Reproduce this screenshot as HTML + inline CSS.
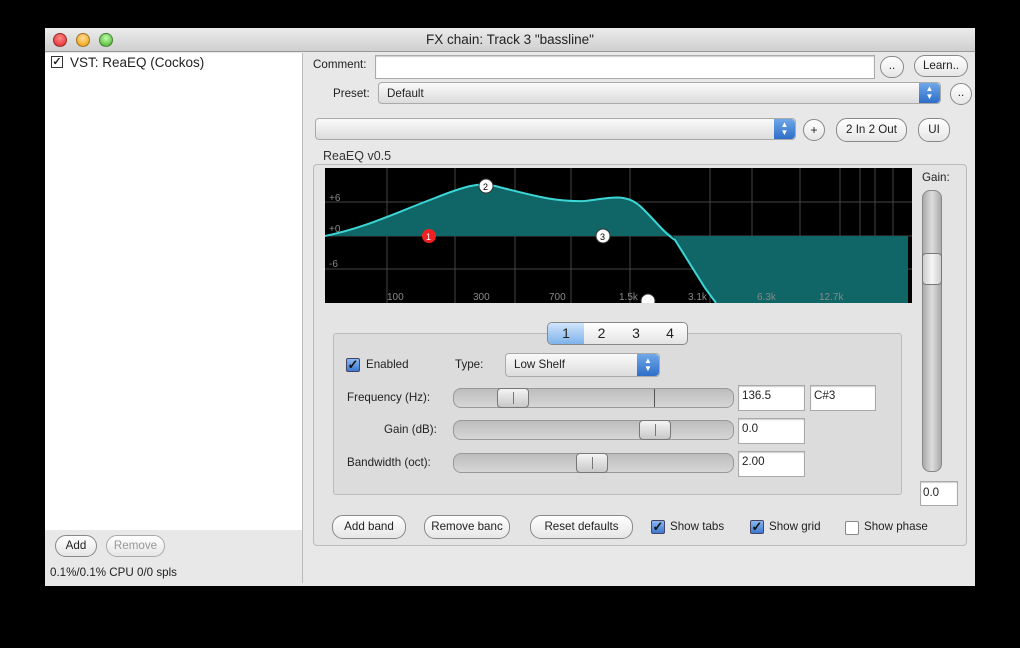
<!DOCTYPE html>
<html><head><meta charset="utf-8"><style>
*{box-sizing:border-box;margin:0;padding:0}
body{width:1020px;height:648px;background:#000;font-family:"Liberation Sans",sans-serif;font-size:11.6px;color:#222;position:relative;overflow:hidden}
.a{position:absolute}
.win{left:45px;top:28px;width:930px;height:558px;background:#e8e8e8}
.title{left:45px;top:28px;width:930px;height:24px;background:linear-gradient(#ececec,#cfcfcf);border-bottom:1px solid #999;text-align:center;font-size:13.5px;line-height:24px;color:#222}
.dot{width:14px;height:14px;border-radius:50%;top:33px;border:1px solid rgba(0,0,0,.35)}
.inp{background:#fff;border:1px solid #aaa;box-shadow:inset 0 1px 1px #ccc}
.btn{background:linear-gradient(#fff,#e6e6e6);border:1px solid #888;border-radius:11px;text-align:center;line-height:20px;height:22px}
.pop{background:linear-gradient(#fafafa,#dcdcdc);border:1px solid #aaa;border-radius:4px}
.arr{background:linear-gradient(#6fa8e8,#2d6ec8);border-radius:0 4px 4px 0;color:#fff;font-size:8px;text-align:center;line-height:8px;padding-top:2px}
.trk{height:20px;background:linear-gradient(#bdbdbd,#d6d6d6);border:1px solid #999;border-radius:8px}
.th{width:32px;height:20px;background:linear-gradient(#f4f4f4,#c8c8c8);border:1px solid #777;border-radius:4px}
.th:after{content:"";position:absolute;left:15px;top:3px;width:1px;height:12px;background:#777}
.cb{width:14px;height:14px;border:1px solid #446;border-radius:2px;background:linear-gradient(#8bb8ee,#3b78d0);color:#111;font-size:13px;line-height:12px;text-align:center;font-weight:bold}
</style></head><body>
<div class="a win"></div>
<div class="a title">FX chain: Track 3 "bassline"</div>
<div class="a dot" style="left:53px;background:radial-gradient(circle at 50% 35%,#f88,#d22)"></div>
<div class="a dot" style="left:76px;background:radial-gradient(circle at 50% 35%,#fd9,#e90)"></div>
<div class="a dot" style="left:99px;background:radial-gradient(circle at 50% 35%,#bfa,#4a2)"></div>
<div class="a" style="left:45px;top:53px;width:257px;height:477px;background:#fff"></div>
<div class="a" style="left:51px;top:56px;width:12px;height:12px;border:1px solid #333;font-size:11px;line-height:10px;text-align:center;font-weight:bold">✓</div>
<div class="a" style="left:70px;top:55px;font-size:13.5px">VST: ReaEQ (Cockos)</div>
<div class="a btn" style="left:55px;top:535px;width:42px;height:22px">Add</div>
<div class="a btn" style="left:106px;top:535px;width:59px;height:22px;color:#999;border-color:#aaa">Remove</div>
<div class="a" style="left:50px;top:566px">0.1%/0.1% CPU 0/0 spls</div>
<div class="a" style="left:302px;top:53px;width:1px;height:530px;background:#bbb"></div>

<div class="a" style="left:313px;top:58px">Comment:</div>
<div class="a inp" style="left:375px;top:55px;width:500px;height:24px"></div>
<div class="a btn" style="left:880px;top:56px;width:24px;height:22px;line-height:18px">..</div>
<div class="a btn" style="left:914px;top:55px;width:54px;height:22px">Learn..</div>
<div class="a" style="left:333px;top:87px">Preset:</div>
<div class="a pop" style="left:378px;top:82px;width:563px;height:22px;padding:4px 8px">Default</div>
<div class="a arr" style="left:919px;top:83px;width:21px;height:20px">▲<br>▼</div>
<div class="a btn" style="left:950px;top:83px;width:22px;height:22px;line-height:18px">..</div>
<div class="a pop" style="left:315px;top:118px;width:481px;height:22px"></div>
<div class="a arr" style="left:774px;top:119px;width:21px;height:20px">▲<br>▼</div>
<div class="a btn" style="left:803px;top:119px;width:22px;height:22px;font-size:12px">+</div>
<div class="a btn" style="left:836px;top:118px;width:71px;height:24px;line-height:22px">2 In 2 Out</div>
<div class="a btn" style="left:918px;top:118px;width:32px;height:24px;line-height:22px">UI</div>
<div class="a" style="left:323px;top:149px;font-size:12.5px;color:#333">ReaEQ v0.5</div>
<div class="a" style="left:313px;top:164px;width:654px;height:382px;border:1px solid #bbb;border-radius:4px;background:#e4e4e4"></div>

<svg class="a" style="left:325px;top:168px" width="587" height="135" viewBox="0 0 587 135">
<rect width="587" height="135" fill="#000"/>
<g stroke="#444" stroke-width="1">
<line x1="62" y1="0" x2="62" y2="135"/><line x1="130" y1="0" x2="130" y2="135"/><line x1="190" y1="0" x2="190" y2="135"/><line x1="246" y1="0" x2="246" y2="135"/><line x1="305" y1="0" x2="305" y2="135"/><line x1="385" y1="0" x2="385" y2="135"/><line x1="427" y1="0" x2="427" y2="135"/><line x1="475" y1="0" x2="475" y2="135"/><line x1="515" y1="0" x2="515" y2="135"/><line x1="535" y1="0" x2="535" y2="135"/><line x1="550" y1="0" x2="550" y2="135"/><line x1="568" y1="0" x2="568" y2="135"/>
<line x1="0" y1="34" x2="587" y2="34"/><line x1="0" y1="68" x2="587" y2="68"/><line x1="0" y1="101" x2="587" y2="101"/>
</g>
<path d="M0 68 C40 60 70 45 110 30 C140 18 155 14 170 18 C210 28 230 34 260 33 C285 30 300 25 315 38 C330 52 338 62 348 68 Z" fill="#106666"/>
<path d="M348 68 L380 120 L390 135 L583 135 L583 68 Z" fill="#106666"/>
<path d="M0 68 C40 60 70 45 110 30 C140 18 155 14 170 18 C210 28 230 34 260 33 C285 30 300 25 315 38 C330 52 340 66 350 72 L380 120 L391 135" fill="none" stroke="#3cd6d6" stroke-width="2"/>
<g fill="#888" font-size="10" font-family="Liberation Sans"><text x="4" y="33">+6</text><text x="4" y="64">+0</text><text x="4" y="99">-6</text>
<text x="62" y="132">100</text><text x="148" y="132">300</text><text x="224" y="132">700</text><text x="294" y="132">1.5k</text><text x="363" y="132">3.1k</text><text x="432" y="132">6.3k</text><text x="494" y="132">12.7k</text></g>
<circle cx="104" cy="68" r="7" fill="#e22"/><text x="101" y="72" font-size="9" fill="#fff">1</text>
<circle cx="161" cy="18" r="7" fill="#fff" stroke="#333"/><text x="158" y="22" font-size="9">2</text>
<circle cx="278" cy="68" r="7" fill="#fff" stroke="#333"/><text x="275" y="72" font-size="9">3</text>
<circle cx="323" cy="133" r="7" fill="#fff" stroke="#333"/>
</svg>

<div class="a" style="left:922px;top:171px">Gain:</div>
<div class="a" style="left:922px;top:190px;width:20px;height:282px;border:1px solid #888;border-radius:8px;background:linear-gradient(90deg,#aaa,#ddd,#aaa)"></div>
<div class="a" style="left:922px;top:253px;width:20px;height:32px;border:1px solid #777;border-radius:4px;background:linear-gradient(90deg,#ccc,#f6f6f6,#ccc)"></div>
<div class="a inp" style="left:920px;top:481px;width:38px;height:25px;padding:4px 2px">0.0</div>

<div class="a" style="left:333px;top:333px;width:569px;height:162px;border:1px solid #bbb;border-radius:3px;background:#dcdcdc"></div>
<div class="a" style="left:547px;top:322px;width:141px;height:23px;border:1px solid #888;border-radius:5px;background:linear-gradient(#fff,#e4e4e4);display:flex;font-size:14px;line-height:21px">
<div style="width:36px;text-align:center;background:linear-gradient(#cfe4fb,#7fb3ea);border-radius:4px 0 0 4px">1</div><div style="width:35px;text-align:center">2</div><div style="width:34px;text-align:center">3</div><div style="width:34px;text-align:center">4</div></div>
<div class="a cb" style="left:346px;top:358px">✓</div>
<div class="a" style="left:366px;top:358px">Enabled</div>
<div class="a" style="left:455px;top:358px">Type:</div>
<div class="a pop" style="left:505px;top:353px;width:155px;height:24px;padding:4px 8px">Low Shelf</div>
<div class="a arr" style="left:637px;top:354px;width:22px;height:22px;padding-top:3px">▲<br>▼</div>
<div class="a" style="left:347px;top:391px">Frequency (Hz):</div>
<div class="a trk" style="left:453px;top:388px;width:281px"></div>
<div class="a" style="left:654px;top:389px;width:1px;height:18px;background:#555"></div>
<div class="a th" style="left:497px;top:388px"></div>
<div class="a inp" style="left:738px;top:385px;width:67px;height:26px;padding:3px 3px">136.5</div>
<div class="a inp" style="left:810px;top:385px;width:66px;height:26px;padding:3px 3px">C#3</div>
<div class="a" style="left:384px;top:423px">Gain (dB):</div>
<div class="a trk" style="left:453px;top:420px;width:281px"></div>
<div class="a th" style="left:639px;top:420px"></div>
<div class="a inp" style="left:738px;top:418px;width:67px;height:26px;padding:3px 3px">0.0</div>
<div class="a" style="left:347px;top:456px">Bandwidth (oct):</div>
<div class="a trk" style="left:453px;top:453px;width:281px"></div>
<div class="a th" style="left:576px;top:453px"></div>
<div class="a inp" style="left:738px;top:451px;width:67px;height:26px;padding:3px 3px">2.00</div>

<div class="a btn" style="left:332px;top:515px;width:74px;height:24px;line-height:22px">Add band</div>
<div class="a btn" style="left:424px;top:515px;width:86px;height:24px;line-height:22px;overflow:hidden;white-space:nowrap">Remove banc</div>
<div class="a btn" style="left:530px;top:515px;width:103px;height:24px;line-height:22px">Reset defaults</div>
<div class="a cb" style="left:651px;top:520px">✓</div><div class="a" style="left:670px;top:520px">Show tabs</div>
<div class="a cb" style="left:750px;top:520px">✓</div><div class="a" style="left:769px;top:520px">Show grid</div>
<div class="a" style="left:845px;top:521px;width:14px;height:14px;border:1px solid #888;background:#fff;border-radius:2px"></div><div class="a" style="left:864px;top:520px">Show phase</div>
</body></html>
